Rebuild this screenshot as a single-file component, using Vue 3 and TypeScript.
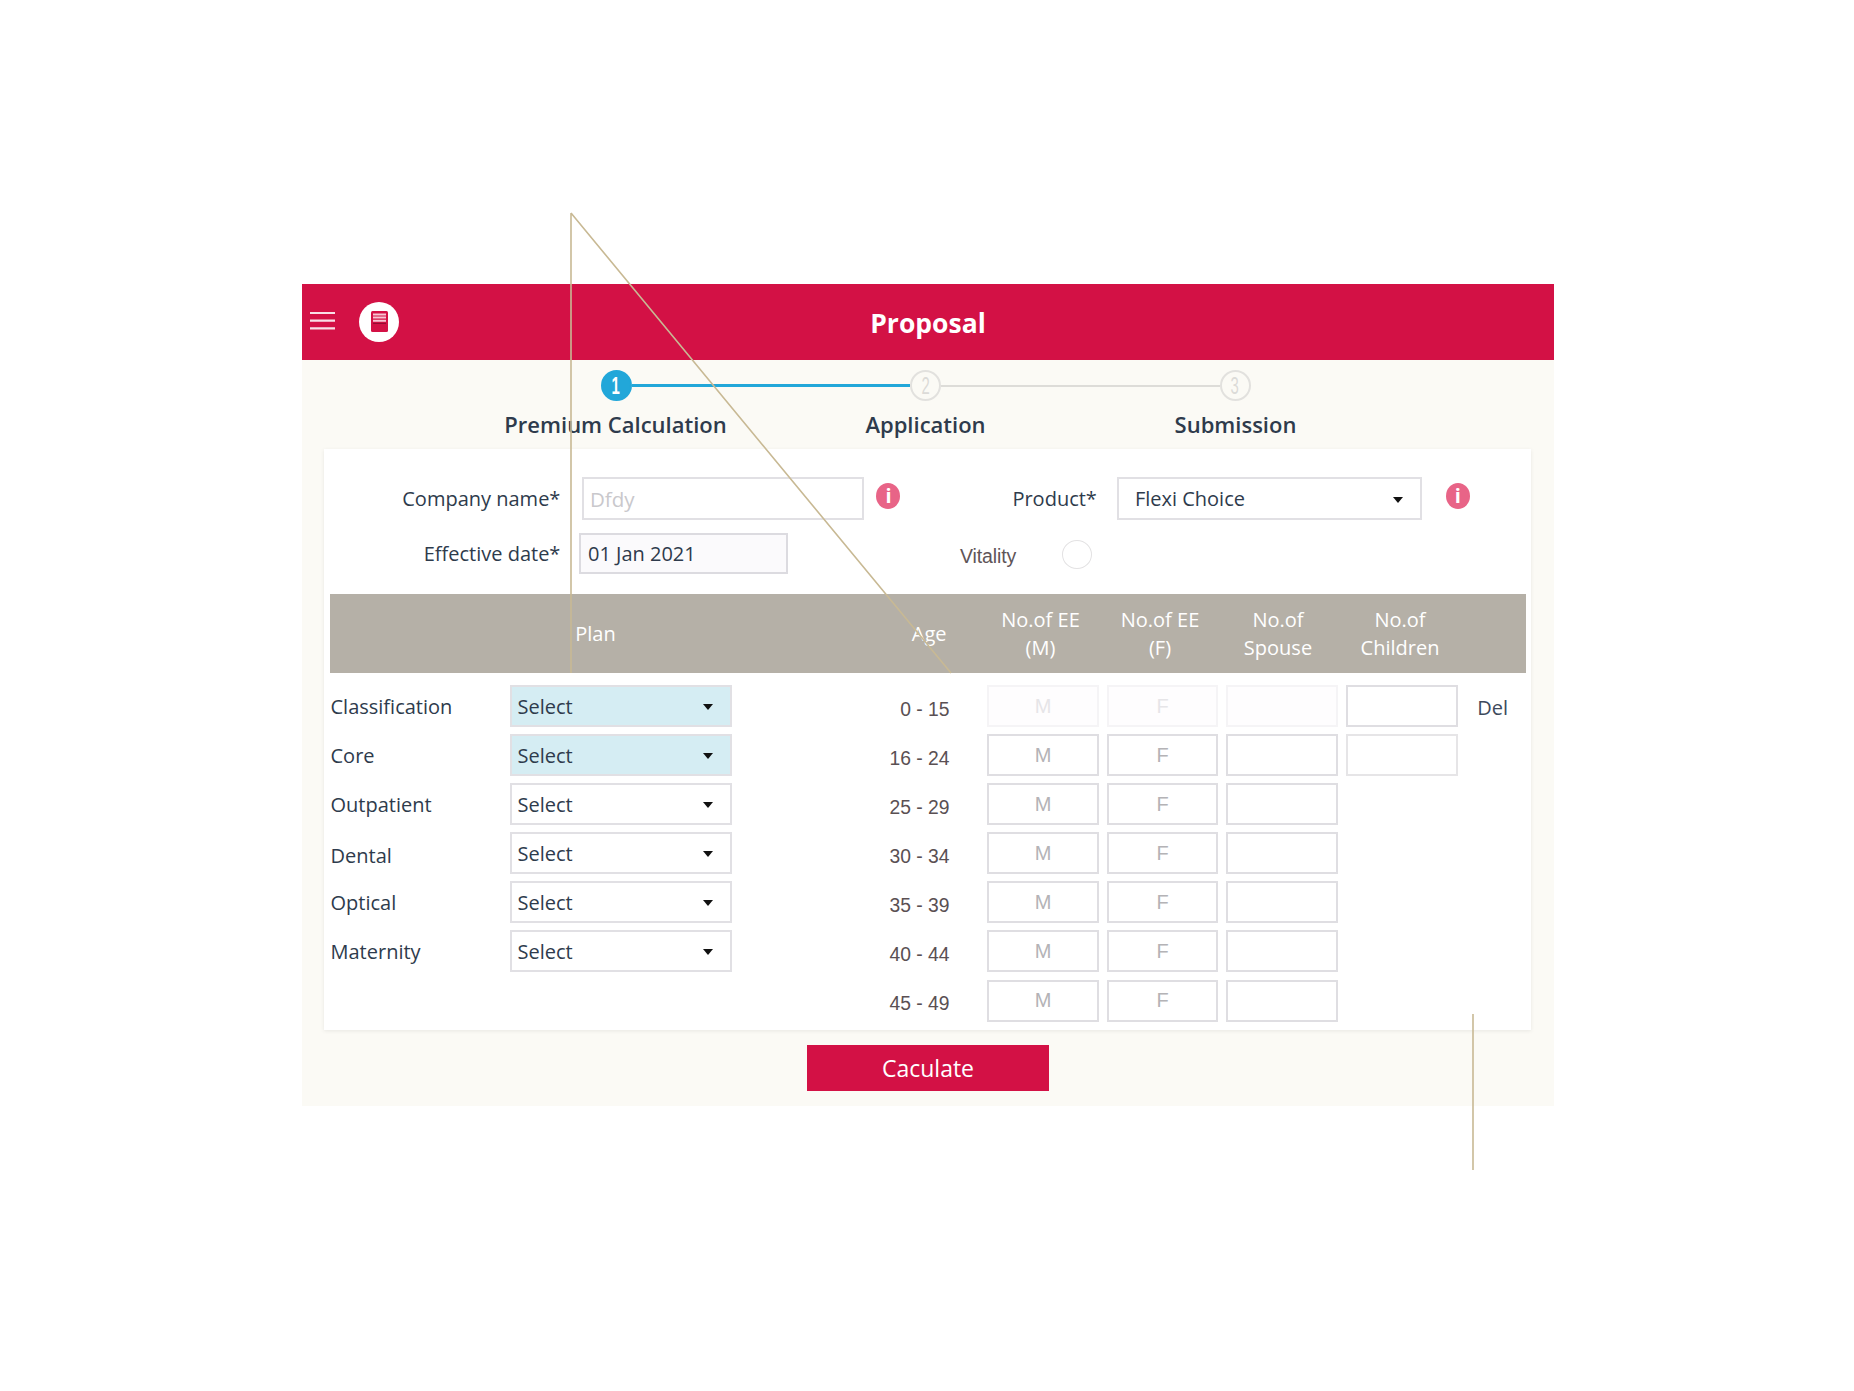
<script setup lang="ts">
interface Row { age: string; label?: string; tint?: boolean; kids?: boolean; del?: boolean; faded?: boolean; soft?: boolean; nudge?: boolean }
const rows: Row[] = [
  { age: '0 - 15', label: 'Classification', tint: true, kids: true, del: true, faded: true },
  { age: '16 - 24', label: 'Core', tint: true, kids: true, soft: true },
  { age: '25 - 29', label: 'Outpatient' },
  { age: '30 - 34', label: 'Dental', nudge: true },
  { age: '35 - 39', label: 'Optical' },
  { age: '40 - 44', label: 'Maternity' },
  { age: '45 - 49' },
]
const steps = ['Premium Calculation', 'Application', 'Submission']
const heads = [['No.of EE', '(M)'], ['No.of EE', '(F)'], ['No.of', 'Spouse'], ['No.of', 'Children']]
</script>

<template>
  <div class="page">
    <div class="app">
      <header class="bar">
        <div class="bar-left">
          <svg class="burger" width="25" height="18" viewBox="0 0 25 18">
            <path d="M0 1H25M0 8.7H25M0 16.3H25" stroke="#f9dfe6" stroke-width="2.2" />
          </svg>
          <span class="logo">
            <svg width="17" height="21" viewBox="0 0 17 21">
              <rect width="17" height="21" rx="1.5" fill="#d31145" />
              <path d="M2 3.4H15M2 6.6H15M2 9.8H15" stroke="#f8c6d4" stroke-width="2" />
              <path d="M2 12.4H15" stroke="#8c0d30" stroke-width="1" />
            </svg>
          </span>
        </div>
        <h1 class="title">Proposal</h1>
        <div></div>
      </header>

      <div class="body">
        <div class="track">
          <span class="dot on"><i>1</i></span>
          <span class="link on"></span>
          <span class="dot"><i>2</i></span>
          <span class="link"></span>
          <span class="dot"><i>3</i></span>
        </div>
        <div class="step-labels">
          <span v-for="s in steps" :key="s">{{ s }}</span>
        </div>

        <section class="card">
          <div class="form-row first">
            <label class="f-label">Company name*</label>
            <div class="box company">Dfdy</div>
            <span class="info">i</span>
            <label class="f-label product">Product*</label>
            <div class="box select-main">Flexi Choice<b class="caret"></b></div>
            <span class="info second">i</span>
          </div>
          <div class="form-row">
            <label class="f-label">Effective date*</label>
            <div class="box date">01 Jan 2021</div>
            <span class="vitality">Vitality</span>
            <span class="toggle"></span>
          </div>

          <div class="thead">
            <span class="th-plan">Plan</span>
            <span class="th-age">Age</span>
            <span v-for="h in heads" :key="h[1]" class="th-n">{{ h[0] }}<br />{{ h[1] }}</span>
          </div>

          <div class="rows">
            <div v-for="r in rows" :key="r.age" class="row">
              <span class="r-label" :class="{ nudge: r.nudge }">{{ r.label }}</span>
              <div class="pick-slot">
                <div v-if="r.label" class="pick" :class="{ tint: r.tint }">Select<b class="caret"></b></div>
              </div>
              <span class="age">{{ r.age }}</span>
              <div class="cells">
                <div class="cell" :class="{ faded: r.faded }">M</div>
                <div class="cell f" :class="{ faded: r.faded }">F</div>
                <div class="cell s" :class="{ faded: r.faded }"></div>
                <div v-if="r.kids" class="cell k" :class="{ soft: r.soft }"></div>
                <span v-if="r.del" class="del">Del</span>
              </div>
            </div>
          </div>
        </section>

        <button class="go" type="button">Caculate</button>
      </div>
    </div>

    <svg class="notes" width="1854" height="1391" viewBox="0 0 1854 1391">
      <path d="M571 213V673M571 213L951 673M1473 1014V1170" fill="none" stroke="#c8b994" stroke-width="1.6" />
    </svg>
  </div>
</template>

<style scoped>
.page { position: relative; height: 1391px; width: 1854px; padding: 284px 0 0 302px; box-sizing: border-box; background: #fff; font-family: "Open Sans", sans-serif; color: #2e3b4c; overflow: hidden; }
.app { width: 1252px; }
.bar { height: 76px; background: #d31145; display: grid; grid-template-columns: 1fr auto 1fr; align-items: center; color: #fff; box-shadow: 0 1px 0 #f3c6d2; }
.bar-left { display: flex; align-items: center; padding-left: 8px; gap: 24.4px; }
.burger { margin-top: -3px; }
.logo { width: 40px; height: 40px; border-radius: 50%; background: #fff; display: flex; align-items: center; justify-content: center; margin-top: -1px; }
.title { margin: 1px 0 0; font-size: 26.5px; font-weight: 700; }
.body { background: #fbfaf5; height: 746px; padding-top: 10px; box-sizing: border-box; display: flex; flex-direction: column; align-items: center; }
.track { display: flex; align-items: center; width: 650px; margin-left: -5px; }
.dot { width: 31px; height: 31px; flex: none; box-sizing: border-box; border-radius: 50%; border: 2px solid #e2e1de; background: #fbfaf5; color: #dcdbd8; display: flex; align-items: center; justify-content: center; font: 24px "Liberation Sans", sans-serif; }
.dot i { font-style: normal; transform: scaleX(.62); }
.dot.on { background: #22a7d9; border-color: #22a7d9; color: #fff; font-weight: 700; }
.link { flex: 1; height: 2px; background: #dddcd8; }
.link.on { background: #22a7d9; height: 3px; }
.step-labels { display: grid; grid-template-columns: repeat(3, 310px); margin-top: 8px; font-size: 22px; font-weight: 600; line-height: 30px; text-align: center; margin-left: -5px; }
.card { align-self: stretch; margin: 10px 23px 0 21.5px; background: #fff; padding: 28px 5px 8px 6.5px; height: 581px; box-sizing: border-box; box-shadow: 0 1px 4px rgba(0, 0, 0, .08); }
.form-row { display: flex; align-items: center; height: 41px; font-size: 20px; }
.form-row.first { height: 43px; margin-bottom: 13px; }
.f-label { width: 230.4px; text-align: right; flex: none; }
.box { box-sizing: border-box; height: 100%; border: 2px solid #e1e0e4; display: flex; align-items: center; position: relative; flex: none; }
.company { width: 282.5px; margin-left: 21.6px; padding-left: 6px; color: #c9c8cc; font-size: 20.5px; }
.info { width: 24px; height: 26px; border-radius: 50%; background: #e86487; color: #fff; font: 700 20px/26px "Open Sans", sans-serif; text-align: center; margin: -5px 0 0 12px; flex: none; }
.product { width: 196.4px; }
.select-main { width: 305px; margin-left: 20px; padding-left: 16px; }
.select-main .caret { right: 17px; margin-top: -2px; }
.info.second { margin-left: 24px; }
.date { width: 209.5px; margin-left: 18.6px; padding-left: 7px; background: #fbfafc; border-color: #dcdbe0; }
.vitality { width: 70px; flex: none; margin-left: 171.5px; font: 19.5px "Liberation Sans", sans-serif; color: #5f5558; position: relative; top: 3px; letter-spacing: -.1px; }
.toggle { width: 30px; height: 29px; border-radius: 50%; border: 1.5px solid #e3e2e3; margin: 2px 0 0 32px; box-sizing: border-box; }
.thead { margin-top: 20px; height: 79px; background: #b5b0a7; color: #fff; font-size: 20px; line-height: 28px; display: grid; grid-template-columns: 531px 123px 113px 126px 110px 134px; align-items: center; text-align: center; }
.th-age { text-align: right; padding-right: 37.5px; }
.rows { margin-top: 12px; margin-left: .5px; display: flex; flex-direction: column; gap: 7.1px; }
.row { display: flex; height: 42px; align-items: center; font-size: 20px; }
.r-label { width: 179px; flex: none; }
.r-label.nudge { position: relative; top: 2px; }
.pick-slot { width: 222px; flex: none; }
.pick { box-sizing: border-box; height: 42px; border: 2px solid #e1e0e4; display: flex; align-items: center; padding-left: 6px; position: relative; background: #fff; }
.pick.tint { background: #d5edf3; }
.caret { position: absolute; top: 50%; right: 17px; margin-top: -2px; width: 0; height: 0; border: 5px solid transparent; border-top: 6px solid #111; border-bottom: 0; }
.age { width: 218px; flex: none; text-align: right; font: 19.3px "Liberation Sans", sans-serif; color: #5a5053; position: relative; top: 3.5px; }
.cells { display: flex; align-items: center; gap: 8px; margin-left: 37.5px; }
.cell { box-sizing: border-box; width: 112px; height: 42px; border: 2px solid #dfdee2; display: flex; align-items: center; justify-content: center; font: 20px "Liberation Sans", sans-serif; color: #b4b3b6; flex: none; }
.cell.f { width: 111px; }
.cell.s { width: 111.5px; }
.cell.k { margin-left: .7px; width: 112px; }
.cell.faded { border-color: #f5f4f6; color: #e6e5e8; background: #fefdfe; }
.cell.soft { border-color: #e6e5e7; }
.del { margin-left: 11px; color: #3d4a5c; position: relative; top: 1px; }
.go { margin-top: 15px; width: 241.4px; height: 46px; border: 0; background: #d31145; color: #fff; font: 500 23px "Open Sans", sans-serif; padding: 0; }
.notes { position: absolute; left: 0; top: 0; pointer-events: none; }
</style>
